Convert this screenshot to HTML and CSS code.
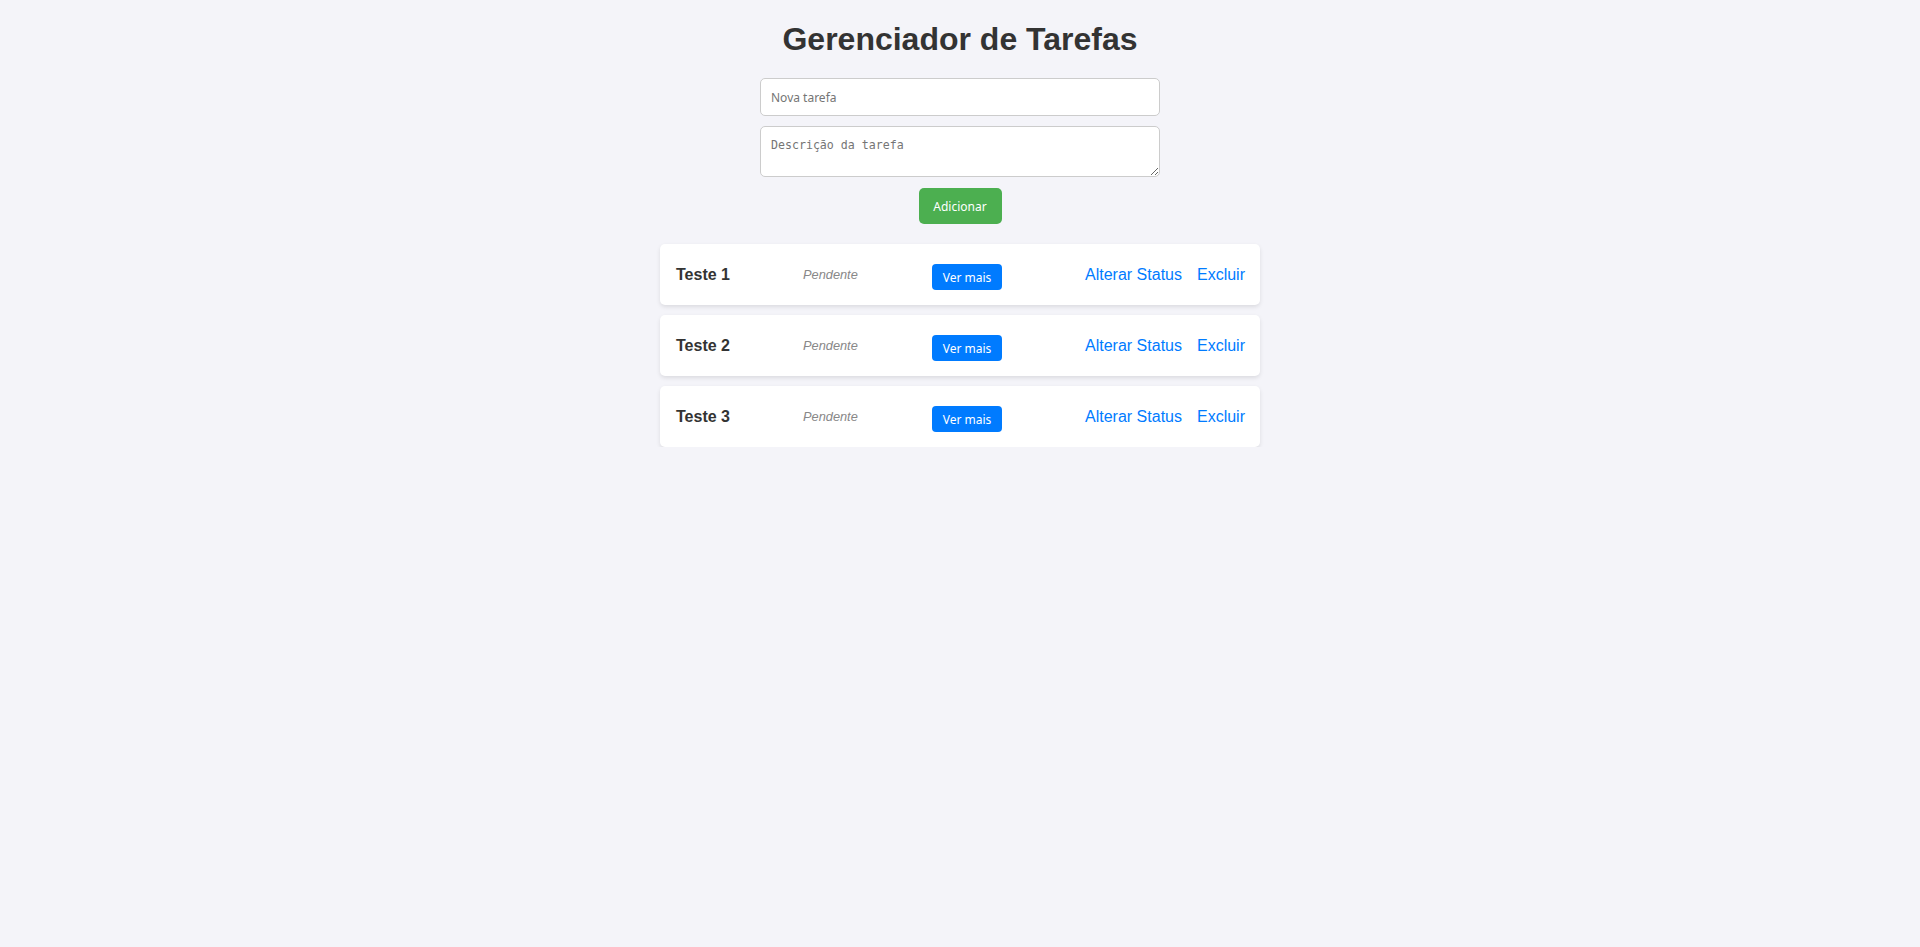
FILE: index.html
```html
<!DOCTYPE html>
<html lang="pt-BR">
<head>
    <meta charset="UTF-8">
    <meta name="viewport" content="width=device-width, initial-scale=1.0">
    <title>Gerenciador de Tarefas</title>
    <link rel="stylesheet" href="styles.css">
</head>
<body>
    <div class="container">
        <h1>Gerenciador de Tarefas</h1>
        <form id="taskForm" class="task-form">
            <input type="text" id="title" name="title" placeholder="Nova tarefa">
            <textarea id="description" name="description" placeholder="Descrição da tarefa"></textarea>
            <button type="submit" class="btn-add">Adicionar</button>
        </form>

        <ul class="task-list">
            <li class="task">
                <span class="task-title">Teste 1</span>
                <span class="task-status">Pendente</span>
                <button type="button" class="btn-more">Ver mais</button>
                <div class="task-actions">
                    <button type="button" class="btn-link">Alterar Status</button>
                    <button type="button" class="btn-link">Excluir</button>
                </div>
            </li>
            <li class="task">
                <span class="task-title">Teste 2</span>
                <span class="task-status">Pendente</span>
                <button type="button" class="btn-more">Ver mais</button>
                <div class="task-actions">
                    <button type="button" class="btn-link">Alterar Status</button>
                    <button type="button" class="btn-link">Excluir</button>
                </div>
            </li>
            <li class="task">
                <span class="task-title">Teste 3</span>
                <span class="task-status">Pendente</span>
                <button type="button" class="btn-more">Ver mais</button>
                <div class="task-actions">
                    <button type="button" class="btn-link">Alterar Status</button>
                    <button type="button" class="btn-link">Excluir</button>
                </div>
            </li>
        </ul>
    </div>
</body>
</html>
```

FILE: styles.css
```css
body {
    font-family: 'Liberation Sans', Arial, sans-serif;
    background-color: #f4f4f9;
    margin: 0;
    padding: 0;
    color: #333;
}

.container {
    display: flex;
    flex-direction: column;
    align-items: center;
}

h1 {
    font-size: 32px;
    margin: 21px 0 20px;
    color: #333;
}

.task-form {
    width: 400px;
    display: flex;
    flex-direction: column;
    align-items: center;
    gap: 10px;
}

.task-form input,
.task-form textarea {
    width: 100%;
    padding: 10px;
    border: 1px solid #ccc;
    border-radius: 5px;
    box-sizing: border-box;
    background: #fff;
    margin: 0;
}

.task-form input {
    height: 38px;
    font-family: 'Noto Sans', sans-serif;
    font-size: 12px;
}

.task-form textarea {
    height: 51px;
    font-family: 'DejaVu Sans Mono', monospace;
    font-size: 11.6px;
    line-height: 14px;
    padding-top: 11px;
}

.task-form input::placeholder,
.task-form textarea::placeholder {
    color: #757575;
}

.btn-add {
    margin-top: 1px;
    height: 36px;
    width: 83px;
    padding: 0;
    border: none;
    border-radius: 5px;
    background-color: #4CAF50;
    color: #fff;
    font-family: 'Noto Sans', sans-serif;
    font-size: 12px;
    cursor: pointer;
}

.task-list {
    list-style: none;
    width: 600px;
    margin: 20px 0 0;
    padding: 0;
    display: flex;
    flex-direction: column;
    gap: 10px;
}

.task {
    display: grid;
    grid-template-columns: 127px 129px 1fr auto;
    align-items: center;
    padding: 15px 15px 15px 16px;
    background: #fff;
    border-radius: 5px;
    box-shadow: 0 2px 4px rgba(0, 0, 0, 0.1);
}

.task-title {
    font-size: 16px;
    font-weight: bold;
    color: #333;
}

.task-status {
    font-size: 12.8px;
    font-style: italic;
    color: #888;
}

.btn-more {
    justify-self: start;
    margin-top: 5px;
    height: 26px;
    width: 70px;
    padding: 0;
    border: none;
    border-radius: 4px;
    background-color: #007bff;
    color: #fff;
    font-family: 'Noto Sans', sans-serif;
    font-size: 12px;
    cursor: pointer;
}

.task-actions {
    display: flex;
    gap: 15px;
}

.btn-link {
    background: none;
    border: none;
    padding: 0;
    color: #007bff;
    font-family: 'Liberation Sans', Arial, sans-serif;
    font-size: 16px;
    cursor: pointer;
}
```
